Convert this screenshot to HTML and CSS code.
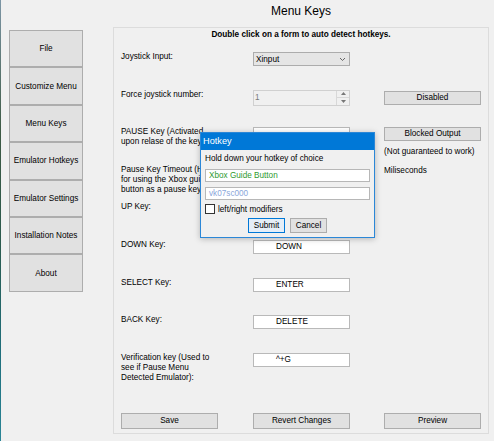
FILE: index.html
```html
<!DOCTYPE html>
<html lang="en">
<head>
  <meta charset="UTF-8">
  <title>Menu Keys</title>
  <link rel="stylesheet" href="styles.css">
</head>
<body>
  <div class="screen">
    <div class="desktop-edge"></div>
    <div class="window">
      <nav class="nav">
        <button class="nav-btn">File</button>
        <button class="nav-btn">Customize Menu</button>
        <button class="nav-btn">Menu Keys</button>
        <button class="nav-btn">Emulator Hotkeys</button>
        <button class="nav-btn">Emulator Settings</button>
        <button class="nav-btn">Installation Notes</button>
        <button class="nav-btn">About</button>
      </nav>

      <main class="main">
        <h1 class="title">Menu Keys</h1>
        <div class="panel">
          <p class="hint">Double click on a form to auto detect hotkeys.</p>

          <div class="rows">
            <div class="lbl">Joystick Input:</div>
            <div class="cell">
              <div class="select">
                <span>Xinput</span>
                <svg width="7" height="5" viewBox="0 0 7 5"><path d="M1 1 L3.5 3.5 L6 1" fill="none" stroke="#666" stroke-width="1"/></svg>
              </div>
            </div>
            <div class="cell"></div>

            <div class="lbl">Force joystick number:</div>
            <div class="cell">
              <div class="spinner">
                <span class="spin-val">1</span>
                <div class="spin-btns">
                  <div class="spin-up"><svg width="5" height="3" viewBox="0 0 5 3"><polygon points="0,3 2.5,0 5,3" fill="#777"/></svg></div>
                  <div class="spin-down"><svg width="5" height="3" viewBox="0 0 5 3"><polygon points="0,0 2.5,3 5,0" fill="#777"/></svg></div>
                </div>
              </div>
            </div>
            <div class="cell"><button class="btn btn-top">Disabled</button></div>

            <div class="lbl">PAUSE Key (Activated<br>upon relase of the key)</div>
            <div class="cell"><div class="hk"></div></div>
            <div class="cell">
              <button class="btn">Blocked Output</button>
              <div class="note">(Not guaranteed to work)</div>
            </div>

            <div class="lbl">Pause Key Timeout (Helpful<br>for using the Xbox guide<br>button as a pause key)</div>
            <div class="cell"><div class="hk"></div></div>
            <div class="cell"><div class="note-top">Miliseconds</div></div>

            <div class="lbl">UP Key:</div>
            <div class="cell"><div class="hk"></div></div>
            <div class="cell"></div>

            <div class="lbl">DOWN Key:</div>
            <div class="cell"><div class="hk">DOWN</div></div>
            <div class="cell"></div>

            <div class="lbl">SELECT Key:</div>
            <div class="cell"><div class="hk">ENTER</div></div>
            <div class="cell"></div>

            <div class="lbl">BACK Key:</div>
            <div class="cell"><div class="hk">DELETE</div></div>
            <div class="cell"></div>

            <div class="lbl">Verification key (Used to<br>see if Pause Menu<br>Detected Emulator):</div>
            <div class="cell"><div class="hk">^+G</div></div>
            <div class="cell"></div>
          </div>

          <div class="actions">
            <button class="btn btn-action">Save</button>
            <button class="btn btn-action">Revert Changes</button>
            <button class="btn btn-action">Preview</button>
          </div>
        </div>
      </main>
    </div>

    <!-- hotkey capture popup -->
    <div class="dialog">
      <div class="dlg-title">Hotkey</div>
      <div class="dlg-body">
        <div class="dlg-text">Hold down your hotkey of choice</div>
        <div class="dlg-input green">Xbox Guide Button</div>
        <div class="dlg-input blue">vk07sc000</div>
        <div class="dlg-check">
          <span class="box"></span>
          <span>left/right modifiers</span>
        </div>
        <div class="dlg-btns">
          <button class="dbtn default">Submit</button>
          <button class="dbtn">Cancel</button>
        </div>
      </div>
    </div>
  </div>
</body>
</html>
```

FILE: styles.css
```css
html, body {
  margin: 0;
  padding: 0;
}
body {
  font-family: "Liberation Sans", Arial, sans-serif;
  font-size: 8.2px;
  color: #000;
  background: #f0f0f0;
}
button {
  font-family: inherit;
  font-size: inherit;
  color: #000;
  padding: 0;
  cursor: default;
}
.screen {
  position: relative;
  width: 494px;
  height: 441px;
  display: flex;
  overflow: hidden;
}
.desktop-edge {
  width: 1px;
  background: linear-gradient(#7d96a6, #3e5a44 30%, #2c5b4e 55%, #1f6f7c 80%, #2a8596);
}
.window {
  flex: 1;
  display: flex;
  background: #f0f0f0;
}

/* left menu */
.nav {
  width: 74px;
  padding: 30px 0 0 8px;
  display: flex;
  flex-direction: column;
}
.nav-btn {
  height: 37.4px;
  width: 74px;
  box-sizing: border-box;
  background: #e1e1e1;
  border: 1px solid #adadad;
  text-align: center;
}

/* right side */
.main {
  margin-left: 30px;
  width: 376px;
  display: flex;
  flex-direction: column;
}
.title {
  margin: 0;
  height: 27px;
  line-height: 22px;
  font-size: 12px;
  font-weight: normal;
  text-align: center;
}
.panel {
  height: 407px;
  box-sizing: border-box;
  border: 1px solid #dcdcdc;
  display: flex;
  flex-direction: column;
}
.hint {
  margin: 0;
  height: 24px;
  line-height: 14px;
  text-align: center;
  font-weight: bold;
}
.rows {
  display: grid;
  grid-template-columns: 98px 97px 97px;
  grid-auto-rows: 37.6px;
  column-gap: 34px;
  padding-left: 7px;
}
.lbl {
  line-height: 10px;
  white-space: nowrap;
}
.cell {
  display: flex;
  flex-direction: column;
}
.select {
  height: 14px;
  box-sizing: border-box;
  border: 1px solid #acacac;
  background: #e5e5e5;
  display: flex;
  align-items: center;
  justify-content: space-between;
  padding: 0 3px 0 2px;
}
.spinner {
  height: 16px;
  box-sizing: border-box;
  border: 1px solid #d0d0d0;
  background: #f0f0f0;
  display: flex;
  justify-content: space-between;
}
.spin-val {
  color: #7a7a7a;
  padding: 1px 0 0 1px;
  line-height: 12px;
}
.spin-btns {
  width: 12px;
  display: flex;
  flex-direction: column;
  border-left: 1px solid #d8d8d8;
}
.spin-up,
.spin-down {
  flex: 1;
  display: flex;
  align-items: center;
  justify-content: center;
}
.spin-up {
  border-bottom: 1px solid #d8d8d8;
}
.hk {
  height: 14px;
  box-sizing: border-box;
  border: 1px solid #b9b9b9;
  background: #fff;
  padding-left: 22px;
  line-height: 12px;
}
.btn {
  height: 14px;
  width: 97px;
  box-sizing: border-box;
  background: #e1e1e1;
  border: 1px solid #adadad;
  line-height: 12px;
}
.btn-top {
  margin-top: 1px;
}
.note {
  margin-top: 6px;
  line-height: 10px;
  white-space: nowrap;
}
.note-top {
  line-height: 10px;
  margin-top: 1px;
}
.actions {
  margin-top: auto;
  padding: 0 0 4px 7px;
  display: grid;
  grid-template-columns: 98px 97px 97px;
  column-gap: 34px;
}
.btn-action {
  height: 16px;
}

/* popup */
.dialog {
  position: absolute;
  left: 200px;
  top: 132px;
  width: 175px;
  height: 106px;
  box-sizing: border-box;
  border: 1px solid #2b87d7;
  background: #f0f0f0;
  box-shadow: 0 1px 6px rgba(0,0,0,0.25);
}
.dlg-title {
  height: 17px;
  line-height: 17px;
  background: #0078d7;
  color: #fff;
  font-size: 9.2px;
  padding-left: 2px;
}
.dlg-body {
  padding: 4px 4px 0 4px;
}
.dlg-text {
  line-height: 10px;
}
.dlg-input {
  margin-top: 5px;
  height: 13px;
  box-sizing: border-box;
  border: 1px solid #b7b7b7;
  background: #fff;
  padding-left: 3px;
  line-height: 11px;
}
.dlg-input.green {
  color: #2f9a2f;
}
.dlg-input.blue {
  margin-top: 5px;
  color: #8aa6da;
}
.dlg-check {
  margin-top: 4px;
  display: flex;
  align-items: center;
  gap: 3px;
  height: 10px;
}
.box {
  width: 10px;
  height: 10px;
  box-sizing: border-box;
  border: 1px solid #333;
  background: #fff;
}
.dlg-btns {
  margin-top: 4px;
  display: flex;
  justify-content: center;
  gap: 5px;
}
.dbtn {
  width: 37px;
  height: 15px;
  box-sizing: border-box;
  border: 1px solid #adadad;
  background: #e1e1e1;
  line-height: 13px;
}
.dbtn.default {
  border-color: #0078d7;
  background: #e5eef7;
}
```
